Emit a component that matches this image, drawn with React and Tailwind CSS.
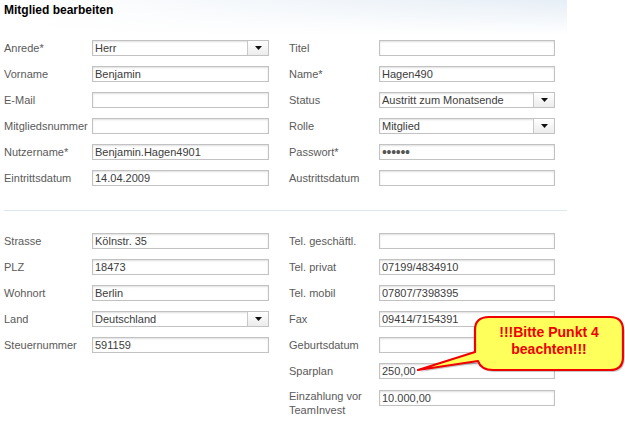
import React from "react";

const font = { fontFamily: '"Liberation Sans", Arial, sans-serif' };

function Arrow() {
  return (
    <div className="flex h-full w-[21px] items-center justify-center border-l border-[#c8c8c8] bg-[linear-gradient(to_bottom,#ffffff,#ececec)]">
      <svg width="7" height="4" viewBox="0 0 7 4">
        <path d="M0 0 H7 L3.5 4 Z" fill="#111" />
      </svg>
    </div>
  );
}

function Input({ value, select, password, w }) {
  return (
    <div
      className={`flex h-[16px] items-center border border-[#c2c2c2] bg-white shadow-[inset_0_1px_2px_rgba(0,0,0,0.13)] ${w}`}
    >
      <div className="flex h-full flex-1 items-center overflow-hidden whitespace-nowrap pl-[2px] text-[11px] leading-[14px] text-[#3c3c3c]">
        {password ? (
          <span className="text-[14px] leading-none tracking-[-0.3px] text-[#555]">••••••</span>
        ) : (
          value
        )}
      </div>
      {select && <Arrow />}
    </div>
  );
}

function Row({ label, value, select, password, side, twoLine, extra = "" }) {
  const lw = side === "l" ? "w-[88px]" : "w-[90px]";
  const iw = side === "l" ? "w-[177px]" : "w-[176px]";
  return (
    <div className={`flex ${twoLine ? "items-start" : "h-[26px] items-center"} ${extra}`}>
      <div className={`${lw} text-[11px] leading-[14px] text-[#5a5a5a] ${twoLine ? "mt-[-1px]" : ""}`}>
        {label}
      </div>
      <Input value={value} select={select} password={password} w={iw} />
    </div>
  );
}

export default function App() {
  return (
    <div className="relative h-[421px] w-[625px] overflow-hidden bg-white" style={font}>
      <div className="h-[35px] w-[567px] bg-[linear-gradient(to_bottom,rgba(255,255,255,0),#ffffff),linear-gradient(to_right,#ffffff,#e6eef6)] pl-1 pt-[2px]">
        <div className="text-[12px] font-bold leading-[16px] text-black">Mitglied bearbeiten</div>
      </div>

      <div className="flex">
        <div className="w-[289px] pl-1">
          <Row side="l" label="Anrede*" value="Herr" select />
          <Row side="l" label="Vorname" value="Benjamin" />
          <Row side="l" label="E-Mail" value="" />
          <Row side="l" label="Mitgliedsnummer" value="" />
          <Row side="l" label="Nutzername*" value="Benjamin.Hagen4901" />
          <Row side="l" label="Eintrittsdatum" value="14.04.2009" />
        </div>
        <div className="flex-1">
          <Row side="r" label="Titel" value="" />
          <Row side="r" label="Name*" value="Hagen490" />
          <Row side="r" label="Status" value="Austritt zum Monatsende" select />
          <Row side="r" label="Rolle" value="Mitglied" select />
          <Row side="r" label="Passwort*" password />
          <Row side="r" label="Austrittsdatum" value="" />
        </div>
      </div>

      <div className="ml-1 mt-[19px] w-[563px] border-t border-[#dde6ee]" />

      <div className="mt-[17px] flex">
        <div className="w-[289px] pl-1">
          <Row side="l" label="Strasse" value="Kölnstr. 35" />
          <Row side="l" label="PLZ" value="18473" />
          <Row side="l" label="Wohnort" value="Berlin" />
          <Row side="l" label="Land" value="Deutschland" select />
          <Row side="l" label="Steuernummer" value="591159" />
        </div>
        <div className="flex-1">
          <Row side="r" label="Tel. geschäftl." value="" />
          <Row side="r" label="Tel. privat" value="07199/4834910" />
          <Row side="r" label="Tel. mobil" value="07807/7398395" />
          <Row side="r" label="Fax" value="09414/7154391" />
          <Row side="r" label="Geburtsdatum" value="" />
          <Row side="r" label="Sparplan" value="250,00" />
          <Row
            side="r"
            twoLine
            extra="mt-[6px]"
            label={
              <>
                Einzahlung vor
                <br />
                TeamInvest
              </>
            }
            value="10.000,00"
          />
        </div>
      </div>

      {/* callout */}
      <svg
        className="absolute left-[415px] top-[313px]"
        width="210"
        height="64"
        viewBox="0 0 210 64"
      >
        <path
          d="M 74 4 H 195 Q 208 4 208 17 V 44 Q 208 57 195 57 H 78 Q 66 57 63 48 L 3 57 L 60 39 V 17 Q 60 4 74 4 Z"
          fill="rgba(0,0,0,0.22)"
          transform="translate(1.5,2)"
        />
        <path
          d="M 74 4 H 195 Q 208 4 208 17 V 44 Q 208 57 195 57 H 78 Q 66 57 63 48 L 3 57 L 60 39 V 17 Q 60 4 74 4 Z"
          fill="#ffff5c"
          stroke="#f00000"
          strokeWidth="2.2"
          strokeLinejoin="round"
        />
      </svg>
      <div className="absolute left-[475px] top-[324px] w-[148px] text-center text-[14px] font-bold leading-[17px] text-[#ee0000]">
        !!!Bitte Punkt 4
        <br />
        beachten!!!
      </div>
    </div>
  );
}
